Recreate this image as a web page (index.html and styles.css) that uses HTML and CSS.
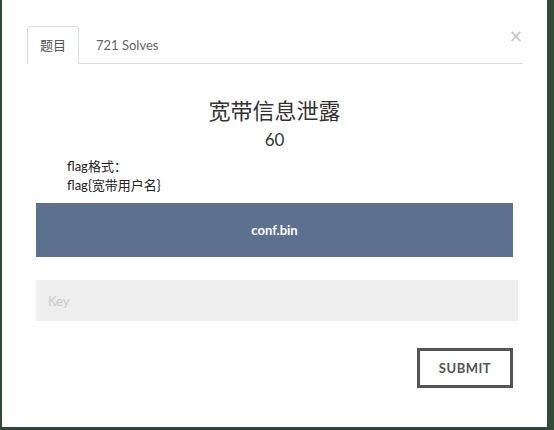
FILE: index.html
```html
<!DOCTYPE html>
<html lang="zh">
<head>
    <meta charset="UTF-8">
    <meta name="viewport" content="width=device-width, initial-scale=1.0">
    <title>宽带信息泄露</title>
    <link rel="stylesheet" href="styles.css">
</head>
<body>
    <div class="modal">
        <div class="tabs">
            <div class="tab active">题目</div>
            <div class="tab">721 Solves</div>
            <span class="close">&times;</span>
        </div>
        <h2 class="title">宽带信息泄露</h2>
        <div class="points">60</div>
        <div class="desc">
            <p>flag格式：</p>
            <p>flag{宽带用户名}</p>
        </div>
        <a class="file" href="#">conf.bin</a>
        <input class="key" type="text" placeholder="Key">
        <div class="actions">
            <button class="submit">SUBMIT</button>
        </div>
    </div>
</body>
</html>
```

FILE: styles.css
```css
body {
    margin: 0;
    background-color: #2f4b37;
    font-family: Lato, "Noto Sans CJK SC", sans-serif;
    color: #333;
}
.modal {
    margin-left: 2px;
    width: 545px;
    height: 427px;
    background: #fff;
    box-sizing: border-box;
    padding: 26px 0 0 0;
}
.tabs {
    display: flex;
    margin: 0 24px 0 25px;
    border-bottom: 1px solid #ddd;
    height: 37px;
    position: relative;
}
.tab {
    font-size: 13px;
    color: #666;
    padding: 0 16px;
    line-height: 37px;
    border: 1px solid transparent;
    border-bottom: none;
    border-radius: 4px 4px 0 0;
}
.tab.active {
    padding: 0 12px;
    border-color: #ddd;
    background: #fff;
    color: #555;
    height: 37px;
    margin-bottom: -1px;
}
.close {
    position: absolute;
    right: 0;
    top: 0;
    font-size: 17px;
    color: #c4c4c4;
    font-family: "DejaVu Sans", sans-serif;
}
.title {
    margin: 32px 0 0;
    text-align: center;
    font-size: 22px;
    font-weight: normal;
    line-height: 30px;
}
.points {
    margin-top: 2px;
    text-align: center;
    font-size: 17px;
    line-height: 24px;
}
.desc {
    margin: 5px 0 0 65px;
    font-size: 13px;
    line-height: 19px;
    color: #222;
}
.desc p {
    margin: 0;
}
.file {
    display: block;
    margin: 8px 0 0 34px;
    width: 477px;
    height: 54px;
    line-height: 54px;
    background: #5c7190;
    color: #fff;
    text-align: center;
    font-size: 13px;
    font-weight: bold;
    text-decoration: none;
}
.key {
    display: block;
    margin: 23px 0 0 34px;
    width: 482px;
    height: 41px;
    box-sizing: border-box;
    border: none;
    background: #eee;
    padding: 0 12px;
    font-family: Lato, sans-serif;
    font-size: 13px;
}
.key::placeholder {
    color: #c8c8c8;
}
.actions {
    display: flex;
    justify-content: flex-end;
    width: 511px;
    margin-top: 27px;
}
.submit {
    width: 96px;
    height: 40px;
    border: 3px solid #555;
    background: #fff;
    color: #555;
    font-family: Lato, sans-serif;
    font-weight: bold;
    font-size: 13px;
    letter-spacing: 0.5px;
}
```
